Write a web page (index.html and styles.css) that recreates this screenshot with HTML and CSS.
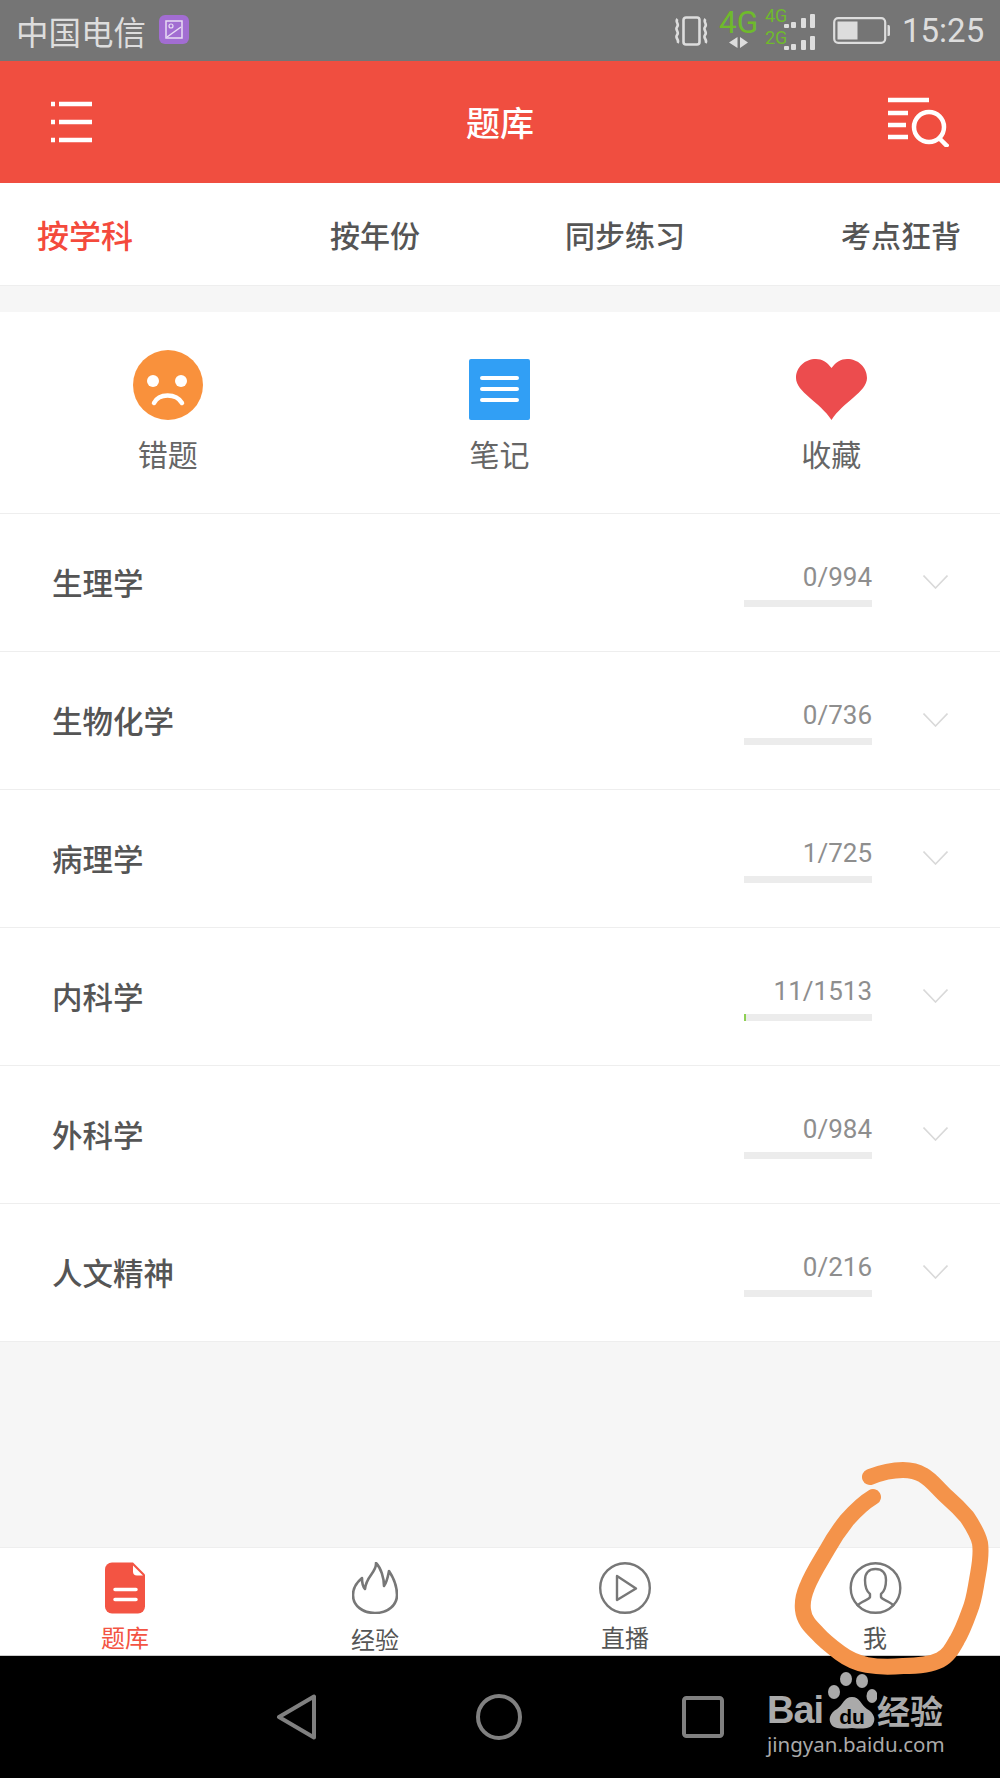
FILE: index.html
```html
<!DOCTYPE html>
<html lang="zh-CN">
<head>
<meta charset="utf-8">
<title>题库</title>
<link rel="stylesheet" href="styles.css">
</head>
<body>
<div class="phone">
  <div class="status">
    <span class="carrier">中国电信</span>
    <svg class="notice" viewBox="0 0 30 29"><rect width="30" height="29" rx="6" fill="#a26dd2"/><rect x="7" y="6" width="16" height="17" fill="none" stroke="#e8dcf4" stroke-width="1.5"/><circle cx="12" cy="11" r="2" fill="none" stroke="#e8dcf4" stroke-width="1.2"/><path d="M8 22 L22 12" stroke="#e8dcf4" stroke-width="1.5"/></svg>
    <span class="status-spacer"></span>
    <svg class="vibrate" viewBox="0 0 35 30" fill="none" stroke="#ddd"><rect x="9.5" y="1.5" width="16" height="27" rx="2.5" stroke-width="2.6"/><path d="M3.5 3 C.5 6 6 8 3 11 C.5 14 6 16 3 19 C.5 22 6 24 3.5 27" stroke-width="2.6"/><path d="M31.5 3 C28.5 6 34 8 31 11 C28.5 14 34 16 31 19 C28.5 22 34 24 31.5 27" stroke-width="2.6"/></svg>
    <svg class="network" viewBox="0 0 96 42">
      <text class="net-big" x="-1" y="24">4G</text>
      <text class="net-small" x="45" y="13">4G</text>
      <text class="net-small" x="45" y="35">2G</text>
      <g fill="#ddd">
        <path d="M17.5 28 V39 L9 33.5Z M20 28 V39 L28 33.5Z"/>
        <rect x="64" y="15" width="5" height="4" rx="1"/><rect x="71" y="13" width="5" height="6" rx="1"/><rect x="81" y="9" width="5" height="10" rx="1"/><rect x="90" y="5" width="5" height="14" rx="1"/>
        <rect x="64" y="37" width="5" height="4" rx="1"/><rect x="71" y="35" width="5" height="6" rx="1"/><rect x="81" y="31" width="5" height="10" rx="1"/><rect x="90" y="27" width="5" height="14" rx="1"/>
      </g>
    </svg>
    <svg class="battery" viewBox="0 0 57 27"><rect x="1.2" y="1.2" width="51" height="24.6" rx="4" fill="none" stroke="#ddd" stroke-width="2.2"/><rect x="4.5" y="4.5" width="20" height="18" fill="#ddd"/><path d="M54.5 8 h1 a1.5 1.5 0 0 1 1.5 1.5 v8 a1.5 1.5 0 0 1 -1.5 1.5 h-1z" fill="#ddd"/></svg>
    <span class="clock">15:25</span>
  </div>

  <header class="topbar">
    <svg class="menu-icon" viewBox="0 0 41 42" stroke="#fff" stroke-width="4.5" fill="none"><path d="M0 3 h4 M8 3 h33 M0 21 h4 M8 21 h33 M0 39 h4 M8 39 h33"/></svg>
    <h1 class="title">题库</h1>
    <svg class="search-icon" viewBox="0 0 61 50" stroke="#fff" fill="none" stroke-width="4.5"><path d="M0 3 h41 M0 16 h20 M0 28 h18 M0 40 h20"/><circle cx="41" cy="30" r="15"/><path d="M51 41 L60 50"/></svg>
  </header>

  <nav class="tabs">
    <a class="tab tab-active">按学科</a>
    <a class="tab">按年份</a>
    <a class="tab">同步练习</a>
    <a class="tab">考点狂背</a>
  </nav>

  <main class="content">
    <section class="shortcuts">
      <div class="shortcut">
        <div class="shortcut-icon">
          <svg width="70" height="70" viewBox="0 0 70 70"><circle cx="35" cy="35" r="35" fill="#f9913c"/><circle cx="20" cy="31" r="6" fill="#fff"/><circle cx="48" cy="31" r="6" fill="#fff"/><path d="M21 53 C26 43 43 43 49 53" fill="none" stroke="#fff" stroke-width="4.5" stroke-linecap="round"/></svg>
        </div>
        <span class="shortcut-label">错题</span>
      </div>
      <div class="shortcut">
        <div class="shortcut-icon">
          <svg width="61" height="61" viewBox="0 0 61 61"><rect width="61" height="61" rx="2" fill="#319ff5"/><path d="M13 19 h35 M13 30 h35 M13 41 h35" stroke="#fff" stroke-width="4" stroke-linecap="round"/></svg>
        </div>
        <span class="shortcut-label">笔记</span>
      </div>
      <div class="shortcut">
        <div class="shortcut-icon">
          <svg width="71" height="61" viewBox="0 0 71 61"><path d="M35.5 9 C31 3 26 0 20 0 C9 0 0 8 0 19 C0 33 24 43 35.5 61 C47 43 71 33 71 19 C71 8 62 0 51 0 C45 0 40 3 35.5 9Z" fill="#ec4c4e"/></svg>
        </div>
        <span class="shortcut-label">收藏</span>
      </div>
    </section>

    <ul class="subjects">
      <li class="subject">
        <span class="subject-name">生理学</span>
        <div class="progress"><span class="progress-count">0/994</span><div class="progress-track"></div></div>
        <svg class="chevron" viewBox="0 0 25 14"><path d="M.5 .5 L12.5 13 L24.5 .5"/></svg>
      </li>
      <li class="subject">
        <span class="subject-name">生物化学</span>
        <div class="progress"><span class="progress-count">0/736</span><div class="progress-track"></div></div>
        <svg class="chevron" viewBox="0 0 25 14"><path d="M.5 .5 L12.5 13 L24.5 .5"/></svg>
      </li>
      <li class="subject">
        <span class="subject-name">病理学</span>
        <div class="progress"><span class="progress-count">1/725</span><div class="progress-track"></div></div>
        <svg class="chevron" viewBox="0 0 25 14"><path d="M.5 .5 L12.5 13 L24.5 .5"/></svg>
      </li>
      <li class="subject">
        <span class="subject-name">内科学</span>
        <div class="progress"><span class="progress-count">11/1513</span><div class="progress-track"><div class="progress-fill" style="width:2px"></div></div></div>
        <svg class="chevron" viewBox="0 0 25 14"><path d="M.5 .5 L12.5 13 L24.5 .5"/></svg>
      </li>
      <li class="subject">
        <span class="subject-name">外科学</span>
        <div class="progress"><span class="progress-count">0/984</span><div class="progress-track"></div></div>
        <svg class="chevron" viewBox="0 0 25 14"><path d="M.5 .5 L12.5 13 L24.5 .5"/></svg>
      </li>
      <li class="subject">
        <span class="subject-name">人文精神</span>
        <div class="progress"><span class="progress-count">0/216</span><div class="progress-track"></div></div>
        <svg class="chevron" viewBox="0 0 25 14"><path d="M.5 .5 L12.5 13 L24.5 .5"/></svg>
      </li>
    </ul>
  </main>

  <footer class="bottom-tabs">
    <a class="bottom-tab bottom-tab-active">
      <svg class="bottom-icon" width="40" height="51" viewBox="0 0 40 51"><path d="M7 0 H28 L40 12 V44 a7 7 0 0 1 -7 7 H7 a7 7 0 0 1 -7 -7 V7 a7 7 0 0 1 7 -7Z" fill="#f35443"/><path d="M28 3 L38 13 H32 a4 4 0 0 1 -4 -4Z" fill="#fff"/><path d="M10 27 H31 M10 37 H31" stroke="#fff" stroke-width="3.5" stroke-linecap="round"/></svg>
      <span>题库</span>
    </a>
    <a class="bottom-tab bottom-tab-low">
      <svg class="bottom-icon" width="46" height="52" viewBox="0 0 46 52" fill="none" stroke="#777" stroke-width="2.6" stroke-linejoin="round"><path d="M24 1 C25 10 14 14 13 27 C10 24 10 20 10 16 C4 21 1 27 1 33 C1 44 11 51 23 51 C36 51 45 43 45 33 C45 24 41 15 37 9 C36 14 35 20 32 24 C32 16 29 6 24 1Z"/></svg>
      <span>经验</span>
    </a>
    <a class="bottom-tab">
      <svg class="bottom-icon" width="52" height="52" viewBox="0 0 52 52" fill="none" stroke="#777" stroke-width="2.4" stroke-linejoin="round"><circle cx="26" cy="26" r="24.8"/><path d="M18 14 L37 26.5 L18 38Z"/></svg>
      <span>直播</span>
    </a>
    <a class="bottom-tab">
      <svg class="bottom-icon" width="53" height="52" viewBox="0 0 53 52" fill="none" stroke="#777" stroke-width="2.4" stroke-linejoin="round"><circle cx="26.5" cy="26" r="24.8"/><path d="M8 44 C12 39 20 38 21 35 V32 C17 29 16 24 16 18 C16 11 20 7 26.5 7 C33 7 37 11 37 18 C37 24 36 29 32 32 V35 C33 38 41 39 45 44"/></svg>
      <span>我</span>
    </a>
  </footer>

  <div class="navbar">
    <svg width="40" height="46" viewBox="0 0 40 46" fill="none" stroke="#808080" stroke-width="4" stroke-linejoin="round"><path d="M38 2.5 V43.5 L3 23Z"/></svg>
    <svg width="46" height="46" viewBox="0 0 46 46" fill="none" stroke="#808080" stroke-width="4"><circle cx="23" cy="23" r="21"/></svg>
    <svg width="42" height="42" viewBox="0 0 42 42" fill="none" stroke="#808080" stroke-width="4"><rect x="2" y="2" width="38" height="38" rx="2.5"/></svg>
  </div>

  <svg class="scribble" viewBox="0 0 1000 1778"><path d="M870 1477 C880 1473 892 1470 903 1470 C912 1470 918 1472 923 1475 C932 1480 938 1489 947 1497 C955 1504 961 1510 967 1517 C973 1526 978 1534 980 1543 C982 1556 979 1568 977 1580 C975 1591 974 1600 970 1610 C966 1621 963 1630 957 1640 C952 1649 948 1656 940 1660 C930 1665 916 1666 903 1666 C890 1667 878 1667 867 1665 C857 1663 848 1659 840 1653 C832 1647 824 1641 817 1633 C810 1626 804 1620 803 1610 C802 1602 804 1594 807 1587 C812 1574 820 1562 827 1550 C833 1539 839 1530 847 1520 C855 1511 863 1503 873 1497" fill="none" stroke="#f4934a" stroke-width="16" stroke-linecap="round" stroke-linejoin="round"/></svg>

  <div class="watermark">
    <div class="wm-logo">
      <span class="wm-bai">Bai</span>
      <svg class="wm-paw" width="50" height="58" viewBox="0 0 50 58">
        <g fill="#aaa"><ellipse cx="19" cy="7" rx="6" ry="7"/><ellipse cx="35" cy="9" rx="6" ry="7"/><ellipse cx="7" cy="20" rx="6" ry="7"/><ellipse cx="45" cy="24" rx="5.5" ry="7"/><path d="M25 25 C33 25 34 33 40 37 C47 41 49 47 46 52 C43 57 36 57 25 56 C14 57 7 57 4 52 C1 47 3 41 10 37 C16 33 17 25 25 25Z"/></g>
        <text class="wm-du" x="25" y="52">du</text>
      </svg>
      <span class="wm-cn">经验</span>
    </div>
    <div class="wm-url">jingyan.baidu.com</div>
  </div>
</div>
</body>
</html>
```
FILE: styles.css
```css
* { box-sizing: border-box; }

html, body { margin: 0; padding: 0; }

body {
  background: #000;
  font-family: "Noto Sans CJK SC", "Noto Sans", sans-serif;
}

.phone {
  position: relative;
  width: 1000px;
  height: 1778px;
  display: flex;
  flex-direction: column;
  overflow: hidden;
}

/* system status bar */
.status {
  height: 61px;
  flex: none;
  background: #757575;
  display: flex;
  align-items: center;
  padding: 0 18px 0 16px;
  color: #ddd;
}
.carrier { font-size: 32.5px; line-height: 61px; margin-right: 13px; white-space: nowrap; }
.notice { width: 30px; height: 29px; margin-top: -3px; }
.status-spacer { flex: 1; }
.vibrate { width: 35px; height: 30px; margin-right: 11px; }
.network { width: 96px; height: 42px; margin-right: 17px; margin-top: -1px; overflow: visible; }
.net-big { font: 31.5px Roboto, sans-serif; fill: #6fba2c; }
.net-small { font: 18px Roboto, sans-serif; fill: #6fba2c; }
.battery { width: 57px; height: 27px; margin-right: 12px; }
.clock { font: 33px/61px Roboto, sans-serif; width: 80px; white-space: nowrap; }

/* red app header */
.topbar {
  height: 122px;
  flex: none;
  background: #f04e40;
  display: flex;
  align-items: center;
  justify-content: space-between;
  padding: 0 51px;
  position: relative;
}
.menu-icon { width: 41px; height: 42px; }
.search-icon { width: 61px; height: 50px; }
.title {
  position: absolute;
  left: 0;
  right: 0;
  margin: 0;
  text-align: center;
  font-size: 34px;
  font-weight: 500;
  color: #fff;
  line-height: 122px;
}

/* category tabs */
.tabs {
  height: 103px;
  flex: none;
  background: #fff;
  border-bottom: 1px solid #eee;
  display: grid;
  grid-template-columns: 293px 235px 276px 1fr;
  align-items: center;
  padding-left: 37px;
}
.tab { font-size: 30px; font-weight: 500; line-height: 44px; color: #555; white-space: nowrap; }
.tab-active { color: #f44a3c; font-size: 32px; }

.content {
  flex: 1;
  background: #f6f6f6;
  padding-top: 26px;
}

/* wrong answers, notes, favourites */
.shortcuts {
  background: #fff;
  height: 202px;
  border-bottom: 1px solid #eee;
  display: grid;
  grid-template-columns: repeat(3, 1fr);
  padding: 38px 3px 0 2px;
}
.shortcut { display: flex; flex-direction: column; align-items: center; }
.shortcut-icon { height: 70px; display: flex; align-items: flex-end; }
.shortcut-icon svg { display: block; }
.shortcut-label { font-size: 30px; line-height: 40px; margin-top: 13px; color: #666; }

/* subject rows */
.subjects { list-style: none; margin: 0; padding: 0; background: #fff; }
.subject {
  height: 138px;
  border-bottom: 1px solid #eee;
  display: flex;
  align-items: center;
  padding: 0 52px 2px;
}
.subject-name { flex: 1; font-size: 30.5px; font-weight: 500; color: #555; line-height: 44px; }
.progress { width: 128px; margin-top: 4px; display: flex; flex-direction: column; }
.progress-count { font: 26px/34px Roboto, sans-serif; color: #8e8e8e; text-align: right; }
.progress-track { height: 7px; margin-top: 6px; background: #ececec; }
.progress-fill { height: 100%; background: #8ed054; }
.chevron { width: 25px; height: 14px; margin-left: 51px; fill: none; stroke: #d9d9d9; stroke-width: 1.6; }

/* bottom tab bar */
.bottom-tabs {
  height: 109px;
  flex: none;
  background: #fff;
  border-top: 1px solid #eee;
  border-bottom: 1px solid #ccc;
  display: grid;
  grid-template-columns: repeat(4, 1fr);
}
.bottom-tab {
  display: flex;
  flex-direction: column;
  align-items: center;
  padding-top: 14px;
  font-size: 24px;
  line-height: 30px;
  color: #555;
}
.bottom-icon { display: block; height: 52px; margin-bottom: 8px; }
.bottom-tab-active { color: #f35443; }
.bottom-tab-low span { margin-top: 2px; }

/* android navigation keys */
.navbar {
  height: 122px;
  flex: none;
  background: #000;
  display: flex;
  align-items: center;
  gap: 160px;
  padding-left: 276px;
}
.navbar svg { display: block; }

/* pen mark circled over the page */
.scribble {
  position: absolute;
  left: 0;
  top: 0;
  width: 1000px;
  height: 1778px;
  pointer-events: none;
}

/* site stamp in the corner */
.watermark {
  position: absolute;
  left: 767px;
  top: 1673px;
  width: 180px;
  color: #aaa;
}
.wm-logo { display: flex; align-items: flex-end; height: 57px; }
.wm-bai {
  font: 700 38px/40px "Liberation Sans", sans-serif;
  letter-spacing: -1px;
  width: 60px;
}
.wm-paw { flex: none; }
.wm-du { font: 700 21px "Liberation Sans", sans-serif; fill: #000; text-anchor: middle; }
.wm-cn { font-size: 33px; font-weight: 700; line-height: 40px; white-space: nowrap; }
.wm-url { font: 20.5px/26px "Noto Sans", sans-serif; margin-top: 1px; white-space: nowrap; }
```
